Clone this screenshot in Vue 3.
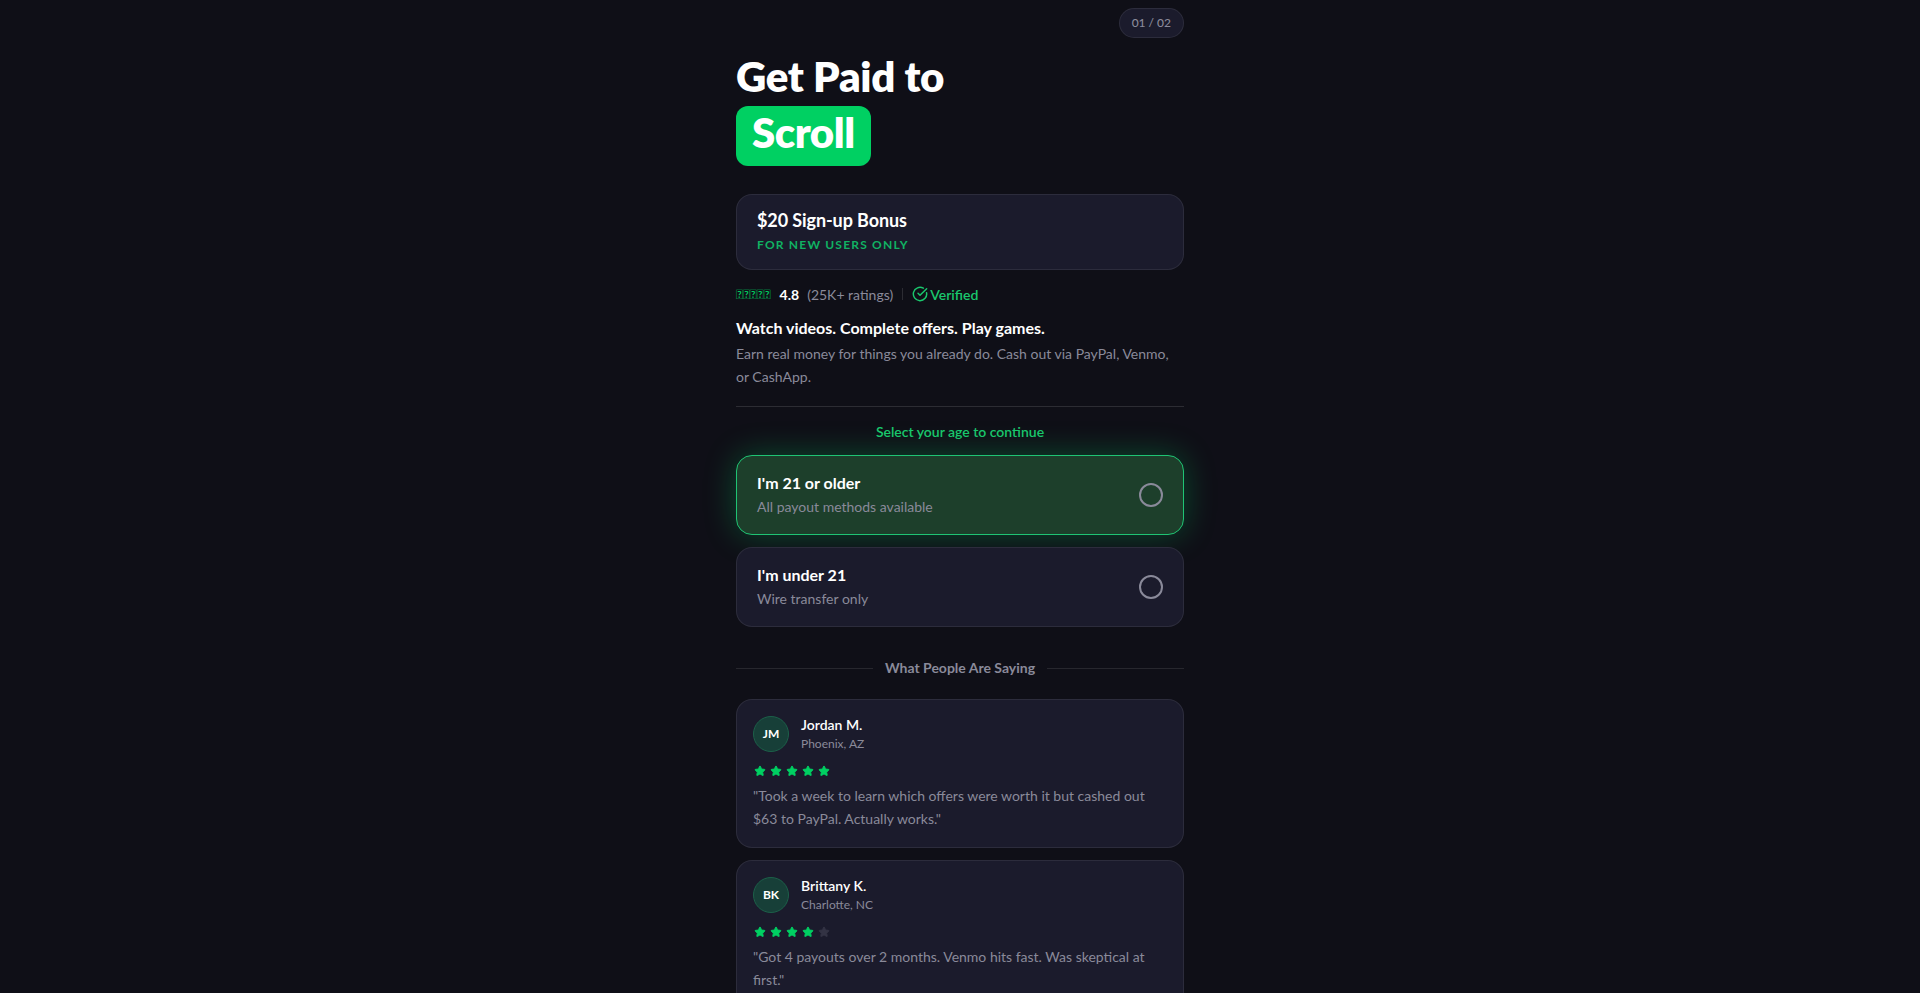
<script setup>
const reviews = [
  { initials: 'JM', name: 'Jordan M.', place: 'Phoenix, AZ', stars: 5, text: '"Took a week to learn which offers were worth it but cashed out $63 to PayPal. Actually works."' },
  { initials: 'BK', name: 'Brittany K.', place: 'Charlotte, NC', stars: 4, text: '"Got 4 payouts over 2 months. Venmo hits fast. Was skeptical at first."' },
]
const ages = [
  { title: "I'm 21 or older", sub: 'All payout methods available', active: true },
  { title: "I'm under 21", sub: 'Wire transfer only', active: false },
]
</script>

<template>
  <div class="page">
    <main class="column">
      <div class="step-row"><span class="step">01 / 02</span></div>
      <h1 class="title">Get Paid to<br /><span class="hl">Scroll</span></h1>
      <section class="bonus">
        <div class="bonus-title">$20 Sign-up Bonus</div>
        <div class="bonus-sub">FOR NEW USERS ONLY</div>
      </section>
      <div class="rating">
        <span class="tofu">&#xE000;&#xE000;&#xE000;&#xE000;&#xE000;</span>
        <strong>4.8</strong>
        <span class="count">(25K+ ratings)</span>
        <span class="sep"></span>
        <span class="verified">
          <svg width="16" height="16" viewBox="0 0 24 24" fill="none" stroke="currentColor" stroke-width="2.2" stroke-linecap="round" stroke-linejoin="round"><path d="M21.8 10A10 10 0 1 1 17 3.34" /><path d="m9 11 3 3L22 4" /></svg>
          Verified
        </span>
      </div>
      <p class="lead">Watch videos. Complete offers. Play games.</p>
      <p class="desc">Earn real money for things you already do. Cash out via PayPal, Venmo, or CashApp.</p>
      <div class="rule"></div>
      <p class="prompt">Select your age to continue</p>
      <div class="options">
        <button v-for="a in ages" :key="a.title" class="option" :class="{ active: a.active }">
          <span class="opt-text">
            <span class="opt-title">{{ a.title }}</span>
            <span class="opt-sub">{{ a.sub }}</span>
          </span>
          <span class="radio"></span>
        </button>
      </div>
      <div class="heading"><span>What People Are Saying</span></div>
      <div class="reviews">
        <article v-for="r in reviews" :key="r.name" class="review">
          <div class="who">
            <span class="avatar">{{ r.initials }}</span>
            <div>
              <div class="name">{{ r.name }}</div>
              <div class="place">{{ r.place }}</div>
            </div>
          </div>
          <div class="stars">
            <svg v-for="n in 5" :key="n" class="star" :class="{ off: n > r.stars }" viewBox="0 0 24 24"><path d="M11.525 2.295a.53.53 0 0 1 .95 0l2.31 4.679a2.123 2.123 0 0 0 1.595 1.16l5.166.756a.53.53 0 0 1 .294.904l-3.736 3.638a2.123 2.123 0 0 0-.611 1.878l.882 5.14a.53.53 0 0 1-.771.56l-4.618-2.428a2.122 2.122 0 0 0-1.973 0L6.396 21.01a.53.53 0 0 1-.77-.56l.881-5.139a2.122 2.122 0 0 0-.611-1.879L2.16 9.795a.53.53 0 0 1 .294-.906l5.165-.755a2.122 2.122 0 0 0 1.597-1.16z" /></svg>
          </div>
          <p class="quote">{{ r.text }}</p>
        </article>
      </div>
    </main>
  </div>
</template>

<style>
html, body { margin: 0; background: #0f0f17; }
</style>

<style scoped>
.page {
  height: 100vh;
  overflow: hidden;
  background: #0f0f17;
  font-family: Lato, "Liberation Sans", sans-serif;
  color: #fff;
  display: flex;
  justify-content: center;
}
.column { width: 448px; display: flex; flex-direction: column; }
.column > * { flex: none; }
p { margin: 0; }
.step-row { display: flex; justify-content: flex-end; padding-top: 8px; }
.step {
  height: 30px; box-sizing: border-box; padding: 0 12px 2px; display: flex; align-items: center;
  border-radius: 15px; background: #1b1b2c; border: 1px solid rgba(255,255,255,.08);
  font-size: 12px; font-weight: 500; color: #8a8a9a;
}
.title { margin: 12px 0 0; font-size: 42px; line-height: 52px; font-weight: 800; letter-spacing: -.3px; }
.hl {
  display: inline-block; background: #00d062; border-radius: 12px; padding: 0 16px; margin-top: 4px;
  height: 60px; line-height: 52px; vertical-align: top; letter-spacing: -.5px;
}
.bonus {
  margin-top: 28px; height: 76px; box-sizing: border-box; padding: 13px 20px;
  background: #1b1b2c; border: 1px solid rgba(255,255,255,.08); border-radius: 16px;
}
.bonus-title { font-size: 18px; line-height: 24px; font-weight: 700; letter-spacing: -.1px; }
.bonus-sub { margin-top: 5px; font-size: 12px; line-height: 16px; font-weight: 700; letter-spacing: 1.2px; color: #10b263; }
.rating { margin-top: 14px; height: 20px; display: flex; align-items: center; gap: 8px; font-size: 14px; color: #8a8a9a; }
.rating strong { color: #fff; font-weight: 700; }
.tofu { font-size: 13px; color: #00d062; margin-right: 1px; }
.sep { width: 1px; height: 12px; margin: 0 1px; background: rgba(255,255,255,.12); }
.verified { display: inline-flex; align-items: center; gap: 2px; color: #1ac76d; font-weight: 600; }
.lead { margin-top: 12px; font-size: 16px; line-height: 24px; font-weight: 700; }
.desc { margin-top: 2px; font-size: 14px; line-height: 23px; color: #8a8a9a; }
.rule { margin-top: 18px; height: 1px; background: rgba(255,255,255,.12); }
.prompt { margin-top: 15px; text-align: center; font-size: 14px; line-height: 20px; font-weight: 600; color: #1ac76d; }
.options { margin-top: 13px; display: flex; flex-direction: column; gap: 12px; }
.option {
  height: 80px; box-sizing: border-box; padding: 0 20px; display: flex; align-items: center; justify-content: space-between;
  background: #1b1b2c; border: 1px solid rgba(255,255,255,.08); border-radius: 16px; font: inherit; color: inherit; text-align: left;
}
.option.active { background: #1d3f2b; border-color: #1fc474; box-shadow: 0 0 32px rgba(0,214,100,.3); }
.opt-text { display: flex; flex-direction: column; padding-bottom: 1px; }
.opt-title { font-size: 16px; line-height: 24px; font-weight: 700; }
.opt-sub { margin-top: 1px; font-size: 14px; line-height: 22px; color: #8a8a9a; }
.radio { width: 24px; height: 24px; box-sizing: border-box; border: 2px solid #8a8a9a; border-radius: 50%; }
.heading { margin-top: 31px; display: flex; align-items: center; gap: 12px; font-size: 14px; line-height: 20px; font-weight: 700; color: #8a8a9a; }
.heading::before, .heading::after { content: ""; flex: 1; height: 1px; background: rgba(255,255,255,.1); }
.reviews { margin-top: 21px; display: flex; flex-direction: column; gap: 12px; }
.review { padding: 16px 16px 17px; background: #1b1b2c; border: 1px solid rgba(255,255,255,.08); border-radius: 16px; }
.who { display: flex; align-items: center; gap: 12px; }
.avatar {
  width: 36px; height: 36px; box-sizing: border-box; border-radius: 50%; padding-bottom: 1px; display: flex; align-items: center; justify-content: center;
  background: #173f38; border: 1px solid #1c6049; font-size: 12px; font-weight: 700;
}
.name { font-size: 14px; line-height: 18px; font-weight: 600; }
.place { margin-top: 2px; font-size: 12px; line-height: 16px; color: #8a8a9a; }
.stars { margin-top: 13px; padding-left: 1px; display: flex; gap: 4px; height: 12px; align-items: center; }
.star { width: 12px; height: 12px; fill: #00d062; stroke: #00d062; stroke-width: 2; stroke-linejoin: round; }
.star.off { fill: #333344; stroke: #333344; }
.quote { margin-top: 7px; font-size: 14px; line-height: 23px; color: #8a8a9a; }
</style>
